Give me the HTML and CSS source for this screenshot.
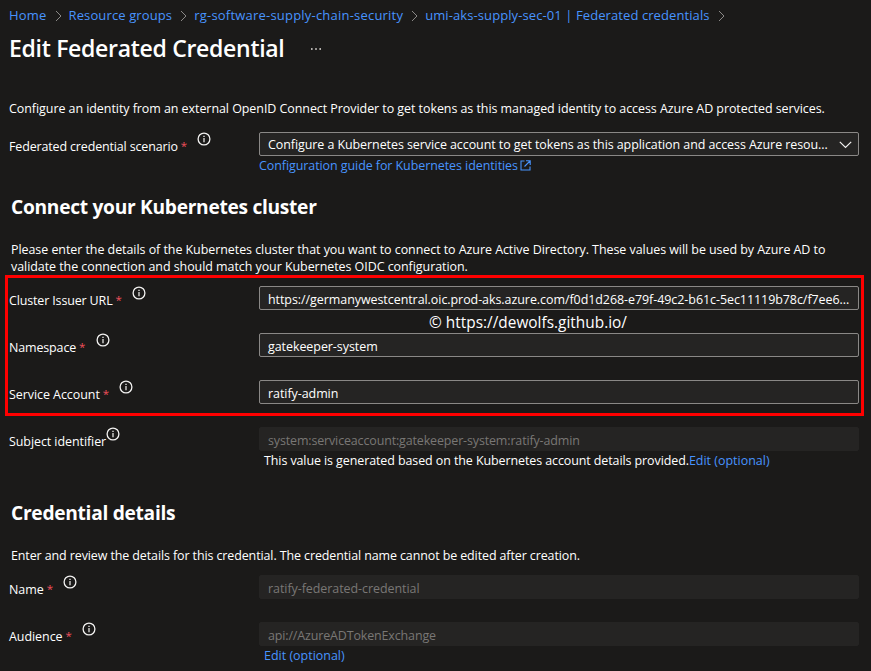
FILE: index.html
```html
<!DOCTYPE html>
<html lang="en">
<head>
<meta charset="utf-8">
<title>Edit Federated Credential</title>
<link rel="stylesheet" href="styles.css">
</head>
<body>
<svg class="defs" aria-hidden="true">
  <symbol id="info" viewBox="0 0 14 14"><circle cx="7" cy="7" r="5.9" fill="none" stroke="currentColor" stroke-width="1.3"/><path d="M6.4 6h1.2v4.2H6.4zM6.35 3.8h1.3v1.25h-1.3z" fill="currentColor"/></symbol>
  <symbol id="sep" viewBox="0 0 7 12"><path d="M1 1l5 5-5 5" fill="none" stroke="currentColor" stroke-width="1"/></symbol>
</svg>
<nav class="breadcrumb">
  <a class="c1">Home</a><svg class="sep"><use href="#sep"/></svg>
  <a class="c2">Resource groups</a><svg class="sep"><use href="#sep"/></svg>
  <a class="c3">rg-software-supply-chain-security</a><svg class="sep"><use href="#sep"/></svg>
  <a class="c4">umi-aks-supply-sec-01 | Federated credentials</a><svg class="sep"><use href="#sep"/></svg>
</nav>
<header class="title-row">
  <h1>Edit Federated Credential</h1>
  <svg class="more" viewBox="0 0 12 2"><path d="M1 0h1.6v2H1zM5.2 0h1.6v2H5.2zM9.4 0H11v2H9.4z" fill="currentColor"/></svg>
</header>
<main>
  <p class="intro">Configure an identity from an external OpenID Connect Provider to get tokens as this managed identity to access Azure AD protected services.</p>

  <div class="row scenario">
    <label><span class="name tight">Federated credential scenario</span><span class="req">*</span><svg class="info"><use href="#info"/></svg></label>
    <div class="control">
      <div class="field select"><span class="value snug">Configure a Kubernetes service account to get tokens as this application and access Azure resou...</span><svg class="chevron" viewBox="0 0 13 8"><path d="M.8 .8l5.7 5.7L12.2 .8" fill="none" stroke="currentColor" stroke-width="1.2"/></svg></div>
      <div class="under"><a class="snug">Configuration guide for Kubernetes identities</a><svg class="ext" viewBox="0 0 11 11"><path d="M4.5 1H1v9h9V6.5M6 .8h4.2V5M10 1L4.5 6.5" fill="none" stroke="currentColor" stroke-width="1.1"/></svg></div>
    </div>
  </div>

  <h2>Connect your Kubernetes cluster</h2>
  <p class="lead">Please enter the details of the Kubernetes cluster that you want to connect to Azure Active Directory. These values will be used by Azure AD to<br>validate the connection and should match your Kubernetes OIDC configuration.</p>

  <section class="rows marked">
    <div class="row">
      <label><span class="name tight">Cluster Issuer URL</span><span class="req">*</span><svg class="info"><use href="#info"/></svg></label>
      <div class="control"><div class="field"><span class="value">https://germanywestcentral.oic.prod-aks.azure.com/f0d1d268-e79f-49c2-b61c-5ec11119b78c/f7ee6...</span></div></div>
    </div>
    <div class="row">
      <label><span class="name tight">Namespace</span><span class="req">*</span><svg class="info"><use href="#info"/></svg></label>
      <div class="control"><div class="field"><span class="value">gatekeeper-system</span></div></div>
    </div>
    <div class="row">
      <label><span class="name">Service Account</span><span class="req">*</span><svg class="info"><use href="#info"/></svg></label>
      <div class="control"><div class="field"><span class="value">ratify-admin</span></div></div>
    </div>
    <div class="frame"></div>
    <div class="watermark">© https://dewolfs.github.io/</div>
  </section>

  <div class="row subject">
    <label><span class="name snug">Subject identifier</span><svg class="info near"><use href="#info"/></svg></label>
    <div class="control">
      <div class="field disabled"><span class="value tight">system:serviceaccount:gatekeeper-system:ratify-admin</span></div>
      <div class="under inset"><span class="note">This value is generated based on the Kubernetes account details provided.</span><a class="edit">Edit (optional)</a></div>
    </div>
  </div>

  <h2 class="second">Credential details</h2>
  <p class="lead single">Enter and review the details for this credential. The credential name cannot be edited after creation.</p>

  <section class="rows">
    <div class="row">
      <label><span class="name">Name</span><span class="req">*</span><svg class="info"><use href="#info"/></svg></label>
      <div class="control"><div class="field disabled"><span class="value">ratify-federated-credential</span></div></div>
    </div>
    <div class="row">
      <label><span class="name">Audience</span><span class="req">*</span><svg class="info"><use href="#info"/></svg></label>
      <div class="control">
        <div class="field disabled"><span class="value tight">api://AzureADTokenExchange</span></div>
        <div class="under inset"><a class="edit">Edit (optional)</a></div>
      </div>
    </div>
  </section>
</main>
</body>
</html>
```
FILE: styles.css
```css
* { box-sizing: border-box; }

body {
  margin: 0;
  height: 671px;
  overflow: hidden;
  background: #1b1a19;
  color: #fff;
  font: 12.48px/17px "Open Sans", "Noto Sans", sans-serif;
  letter-spacing: -0.055px;
}

.defs { position: absolute; width: 0; height: 0; }
h1, h2, p { margin: 0; }
a { color: #4894fe; }
svg { display: block; flex: none; }

.breadcrumb {
  display: flex;
  align-items: center;
  height: 30px;
  padding: 1px 0 0 9px;
  font-size: 13px;
  white-space: nowrap;
}
.c1 { letter-spacing: 0.2px; }
.c2 { letter-spacing: 0.12px; }
.c3 { letter-spacing: 0.21px; }
.c4 { letter-spacing: 0.09px; }
.sep { width: 7px; height: 12px; margin: 1px 7px 0 8px; color: #8a8886; }

.title-row {
  display: flex;
  align-items: center;
  height: 36px;
  padding-left: 9px;
}
h1 { font-size: 23.04px; line-height: 36px; font-weight: 600; letter-spacing: -0.31px; }
.more { width: 12px; height: 2px; margin: 2px 0 0 26px; color: #b3b0ad; }

.intro { padding: 34px 0 0 9px; white-space: nowrap; }

.row { display: flex; padding-left: 9px; }
label { display: flex; align-items: flex-start; width: 250px; }
.name { margin-top: 6px; }
.req { margin: 5px 0 0 3px; width: 6px; color: #f1505b; font-size: 11.5px; }
.info { width: 14px; height: 14px; margin: 0 0 0 10.5px; color: #f3f2f1; }
.info.near { margin-left: -0.5px; }
.control { width: 600px; }

.field {
  display: flex;
  align-items: center;
  height: 24px;
  padding: 3px 8px 0;
  border: 1px solid #8a8886;
  border-radius: 2px;
  background: #252423;
  white-space: nowrap;
}
.field.disabled { border-color: #252423; color: #797775; }
.field.select { justify-content: space-between; padding: 1px 6px 0 8px; }
.chevron { width: 13px; height: 8px; color: #f3f2f1; }
.tight { letter-spacing: -0.14px; }
.snug { letter-spacing: -0.07px; }

.under { display: flex; align-items: center; height: 19px; white-space: nowrap; }
.ext { width: 11px; height: 11px; margin-left: 2.5px; color: #4894fe; }
.inset { padding-left: 5px; }
.note { letter-spacing: -0.09px; }
.edit { letter-spacing: 0; }

.scenario { padding-top: 15px; }

h2 {
  padding: 18px 0 0 11px;
  font-size: 19.2px;
  line-height: 28px;
  font-weight: 700;
  letter-spacing: -0.3px;
}
.lead { padding: 20px 0 0 11px; white-space: nowrap; }

.rows { display: grid; gap: 23px; }
.marked { position: relative; margin-top: 11px; }
.frame {
  position: absolute;
  left: 5px;
  top: -11px;
  width: 859px;
  height: 141px;
  border: 3px solid #f00;
}
.watermark {
  position: absolute;
  left: 429px;
  top: 27px;
  font-size: 15.36px;
  line-height: 20px;
  letter-spacing: 0.02px;
}
.subject { padding-top: 23px; }
.second { padding-top: 29px; }
.single { letter-spacing: -0.105px; padding-bottom: 11px; }
```
